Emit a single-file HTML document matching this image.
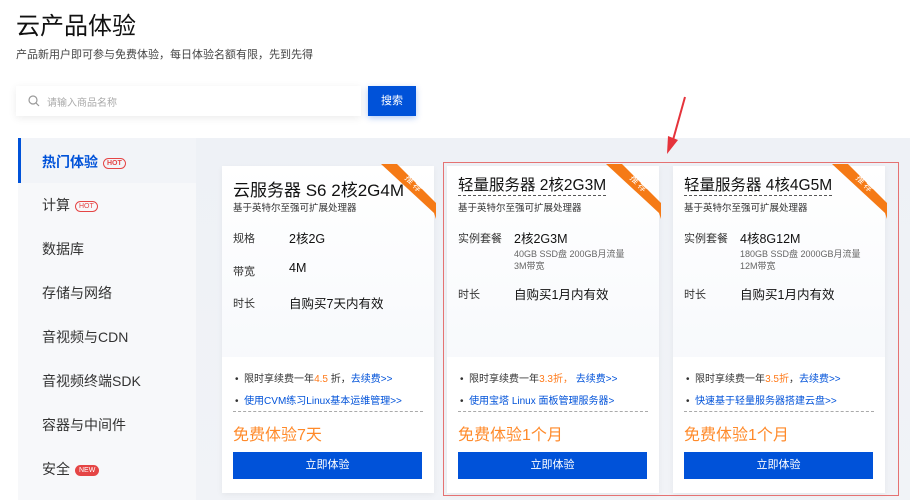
<!DOCTYPE html>
<html><head><meta charset="utf-8"><style>
*{margin:0;padding:0;box-sizing:border-box}
body{width:914px;height:500px;overflow:hidden;background:#fff;font-family:"Liberation Sans","Noto Sans CJK SC",sans-serif;color:#222;position:relative}
.abs{position:absolute;white-space:nowrap}
h1{position:absolute;left:16px;top:6px;font-size:24px;font-weight:normal;color:#111}
.sub{left:16px;top:46px;font-size:11px;color:#444}
.search{position:absolute;left:16px;top:86px;width:345px;height:30px;background:#fff;box-shadow:0 2px 8px rgba(0,0,0,.08)}
.btn-s{position:absolute;left:368px;top:86px;width:48px;height:30px;background:#0052d9;color:#fff;font-size:11px;text-align:center;line-height:30px;box-shadow:0 2px 6px rgba(0,82,217,.3)}
.side{position:absolute;left:18px;top:138px;width:178px;height:362px;background:#f7f8fa}
.side div{position:absolute;left:24px;font-size:14px;color:#333}
.active{position:absolute;left:18px;top:138px;width:178px;height:45px;background:#f2f4f8;border-left:3px solid #0052d9}
.tag{display:inline-block;font-size:7px;border:1px solid #e54545;color:#e54545;border-radius:6px;padding:0 3px;line-height:9px;vertical-align:middle;margin-left:5px}
.new{background:#e54545;color:#fff}
.main{position:absolute;left:196px;top:138px;width:714px;height:362px;background:linear-gradient(#eef1f6,#f1f3f7)}
.card{position:absolute;top:166px;width:212px;height:327px;background:linear-gradient(#fff 0%,#f2f5fa 100%);box-shadow:0 2px 6px rgba(0,0,0,.05)}
.card .bot{position:absolute;left:0;top:191px;width:212px;height:136px;background:#fff}
.t{left:11px;top:11px;font-size:15.5px;color:#111}
.t.u{border-bottom:1px dashed #555;line-height:18px}
.st{left:11px;top:34px;font-size:9.5px;color:#333}
.lb{left:11px;font-size:11px;color:#333}
.vl{left:67px;font-size:12.5px;color:#111}
.sm{left:67px;font-size:9px;color:#666}
.li{left:13px;font-size:10px;color:#333}
.li a{color:#0052d9;text-decoration:none}
.or{color:#ff7a1a}
.dash{position:absolute;left:11px;top:245px;width:190px;border-top:1px dashed #aaa}
.free{left:11px;top:255px;font-size:16px;color:#ff8a2a}
.go{position:absolute;left:11px;top:286px;width:189px;height:27px;background:#0052d9;color:#fff;font-size:11px;text-align:center;line-height:27px}
</style></head><body>
<h1>云产品体验</h1>
<div class="abs sub">产品新用户即可参与免费体验，每日体验名额有限，先到先得</div>
<div class="search"><svg class="abs" style="left:12px;top:9px" width="12" height="12" viewBox="0 0 12 12"><circle cx="5" cy="5" r="4" fill="none" stroke="#999" stroke-width="1.2"/><path d="M8 8l3 3" stroke="#999" stroke-width="1.2"/></svg><span class="abs" style="left:31px;top:8px;font-size:10px;color:#aaa">请输入商品名称</span></div>
<div class="btn-s">搜索</div>
<div class="side">
<div style="top:57px">计算<span class="tag">HOT</span></div>
<div style="top:101px">数据库</div>
<div style="top:145px">存储与网络</div>
<div style="top:189px">音视频与CDN</div>
<div style="top:233px">音视频终端SDK</div>
<div style="top:277px">容器与中间件</div>
<div style="top:321px">安全<span class="tag new">NEW</span></div>
</div>
<div class="active"></div>
<div class="abs" style="left:42px;top:152px;font-size:14px;color:#0052d9;font-weight:bold">热门体验<span class="tag">HOT</span></div>
<div class="main"></div>

<div class="card" style="left:222px"><div class="bot"></div>
<div class="abs t" style="font-size:17px;top:10px">云服务器 S6 2核2G4M</div><div class="abs st">基于英特尔至强可扩展处理器</div>
<div class="abs lb" style="top:64px">规格</div><div class="abs vl" style="top:62px">2核2G</div>
<div class="abs lb" style="top:97px">带宽</div><div class="abs vl" style="top:95px">4M</div>
<div class="abs lb" style="top:129px">时长</div><div class="abs vl" style="top:127px">自购买7天内有效</div>
<div class="abs li" style="top:204px">•&nbsp; 限时享续费一年<span class="or">4.5</span> 折，<a>去续费>></a></div>
<div class="abs li" style="top:226px">•&nbsp; <a>使用CVM练习Linux基本运维管理>></a></div>
<div class="dash"></div><div class="abs free">免费体验7天</div><div class="go">立即体验</div>
</div>
<div class="card" style="left:447px"><div class="bot"></div>
<div class="abs t u">轻量服务器 2核2G3M</div><div class="abs st">基于英特尔至强可扩展处理器</div>
<div class="abs lb" style="top:64px">实例套餐</div><div class="abs vl" style="top:62px">2核2G3M</div>
<div class="abs sm" style="top:81px">40GB SSD盘 200GB月流量</div><div class="abs sm" style="top:93px">3M带宽</div>
<div class="abs lb" style="top:120px">时长</div><div class="abs vl" style="top:118px">自购买1月内有效</div>
<div class="abs li" style="top:204px">•&nbsp; 限时享续费一年<span class="or">3.3折，</span> <a>去续费>></a></div>
<div class="abs li" style="top:226px">•&nbsp; <a>使用宝塔 Linux 面板管理服务器></a></div>
<div class="dash"></div><div class="abs free">免费体验1个月</div><div class="go">立即体验</div>
</div>
<div class="card" style="left:673px"><div class="bot"></div>
<div class="abs t u">轻量服务器 4核4G5M</div><div class="abs st">基于英特尔至强可扩展处理器</div>
<div class="abs lb" style="top:64px">实例套餐</div><div class="abs vl" style="top:62px">4核8G12M</div>
<div class="abs sm" style="top:81px">180GB SSD盘 2000GB月流量</div><div class="abs sm" style="top:93px">12M带宽</div>
<div class="abs lb" style="top:120px">时长</div><div class="abs vl" style="top:118px">自购买1月内有效</div>
<div class="abs li" style="top:204px">•&nbsp; 限时享续费一年<span class="or">3.5折</span>，<a>去续费>></a></div>
<div class="abs li" style="top:226px">•&nbsp; <a>快速基于轻量服务器搭建云盘>></a></div>
<div class="dash"></div><div class="abs free">免费体验1个月</div><div class="go">立即体验</div>
</div>

<svg class="abs" style="left:0;top:0" width="914" height="500">
<g fill="#f57a16">
<polygon points="381,164 397,164 436,203 436,219 434,213"/>
<polygon points="606,164 622,164 661,203 661,219 659,213"/>
<polygon points="832,164 848,164 887,203 887,219 885,213"/>
</g>
<g fill="#fff" font-size="9" font-family="Noto Sans CJK SC,sans-serif">
<text x="402" y="184" transform="rotate(45 410 184)">推 荐</text>
<text x="627" y="184" transform="rotate(45 635 184)">推 荐</text>
<text x="853" y="184" transform="rotate(45 861 184)">推 荐</text>
</g>
<rect x="443.5" y="162.5" width="455" height="333" fill="none" stroke="#e57272" stroke-width="1"/>
<path d="M685 97 L673 140" stroke="#e5333b" stroke-width="2"/>
<polygon points="667,154 668,136 678,140" fill="#e5333b"/>
</svg>
</body></html>
